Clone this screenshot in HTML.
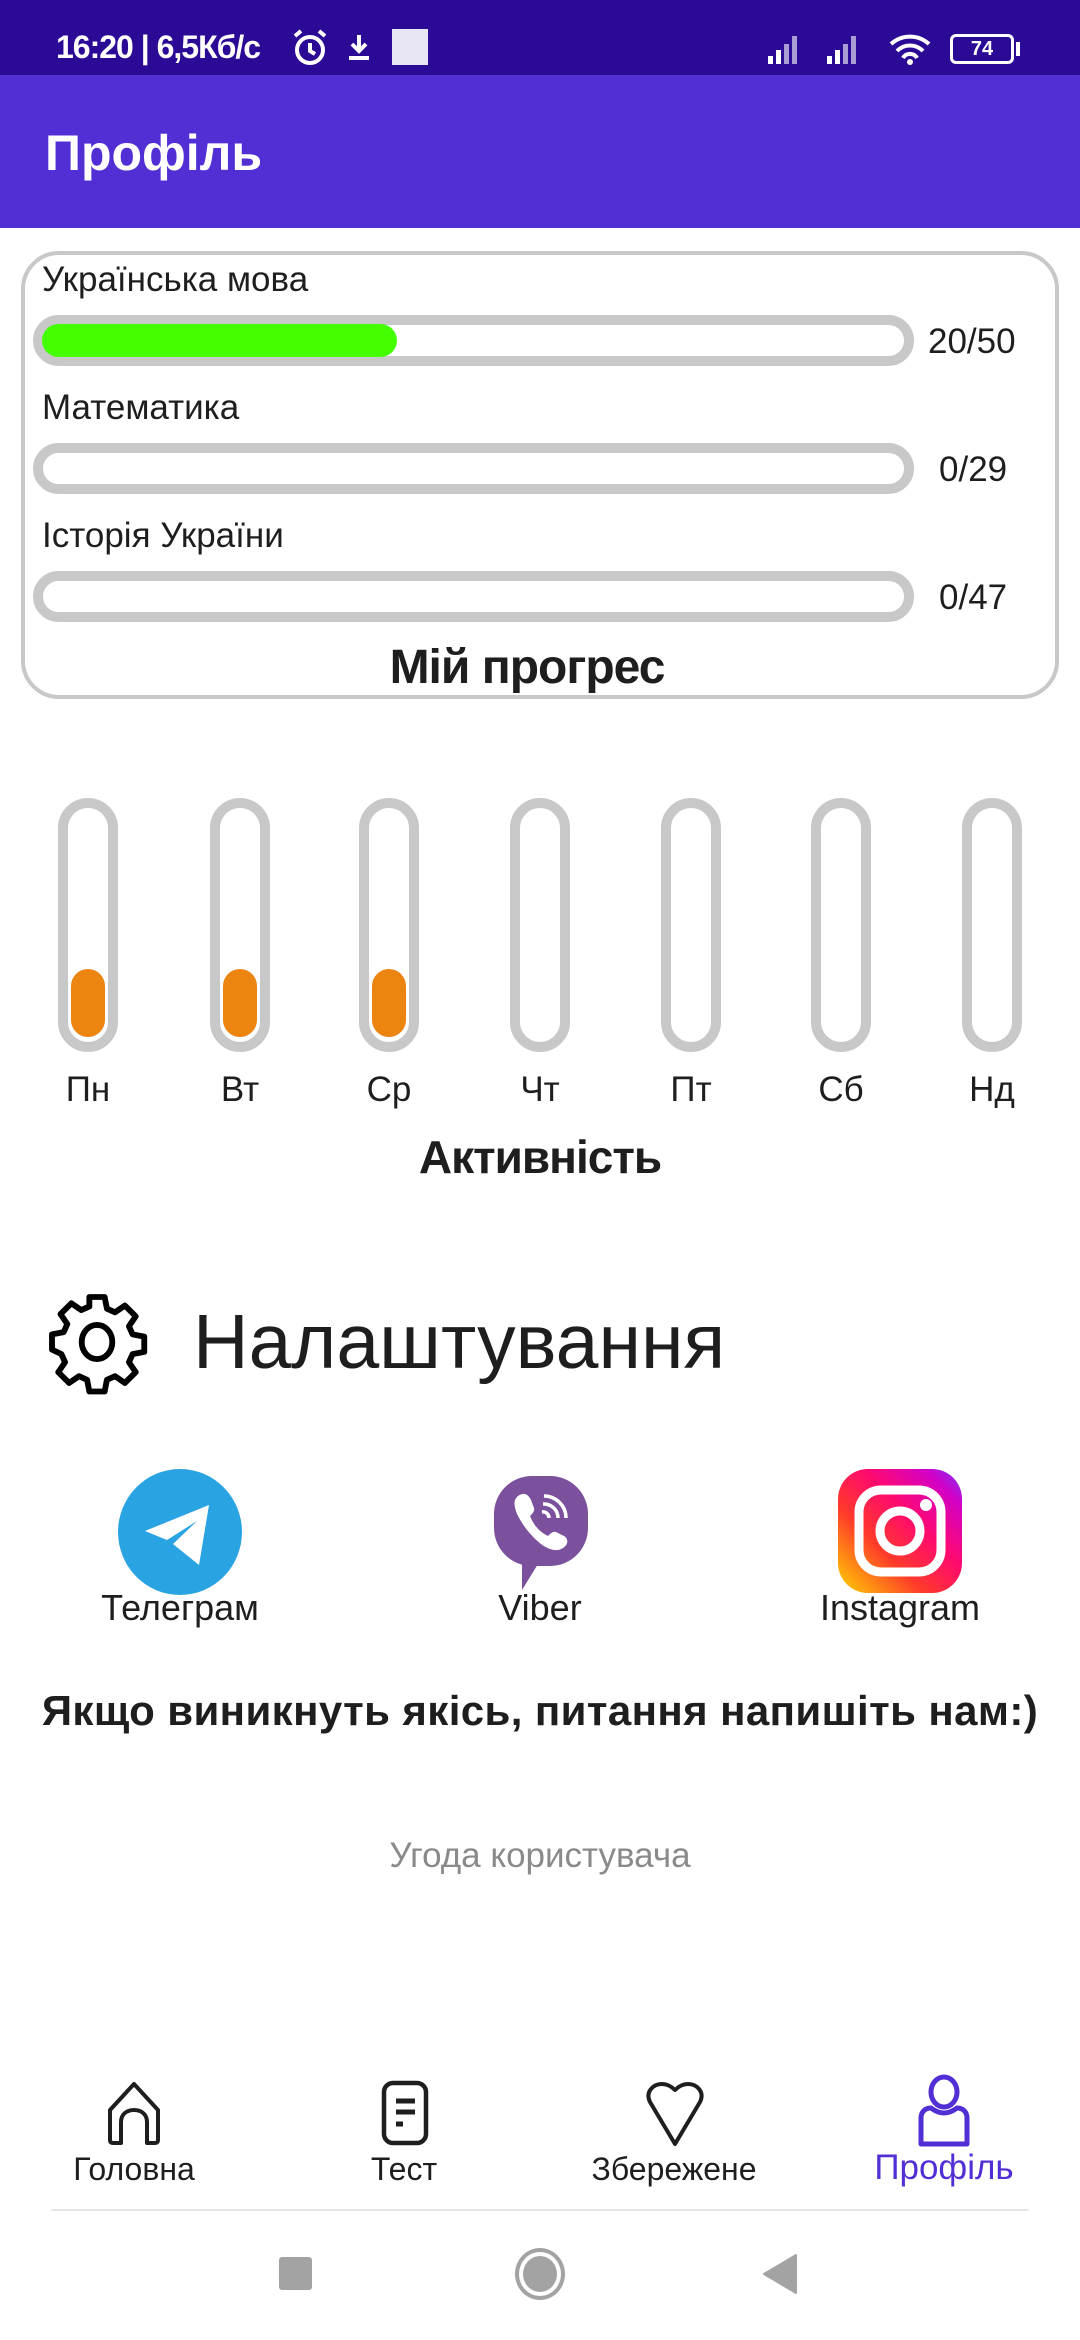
<!DOCTYPE html>
<html><head><meta charset="utf-8"><style>
*{margin:0;padding:0;box-sizing:border-box}
body{width:1080px;height:2340px;position:relative;background:#fff;font-family:"Liberation Sans","DejaVu Sans",sans-serif;color:#1e1e1e;overflow:hidden}
.a{position:absolute;white-space:nowrap}
.bar{position:absolute;left:33px;width:881px;height:51px;border:10px solid #c8c8c8;border-radius:26px;background:#fff}
.lbl{position:absolute;left:42px;font-size:35px;line-height:1}
.num{position:absolute;font-size:35px;line-height:1}
.col{position:absolute;top:798px;width:60px;height:254px;border:10px solid #c8c8c8;border-radius:30px;background:#fff}
.fill{position:absolute;left:3px;bottom:5px;width:34px;height:68px;border-radius:17px;background:#ec8410}
.day{position:absolute;top:1072px;width:120px;text-align:center;font-size:35px;line-height:1}
.nl{position:absolute;top:2153px;width:240px;text-align:center;font-size:32px;line-height:1}
</style></head><body>
<div class="a" style="left:0;top:0;width:1080px;height:75px;background:#2b0b96"></div>
<div class="a" style="left:56px;top:29px;font-size:32px;color:#fff;font-weight:bold;letter-spacing:-1px">16:20 | 6,5Кб/с</div>
<svg class="a" style="left:290px;top:28px" width="40" height="40" viewBox="0 0 40 40"><circle cx="20" cy="22" r="13" fill="none" stroke="#fff" stroke-width="4"/><path d="M20 15v8l5 3M5 8l6-5M35 8l-6-5" stroke="#fff" stroke-width="4" fill="none"/></svg>
<svg class="a" style="left:344px;top:32px" width="30" height="30" viewBox="0 0 30 30"><path d="M15 3v16M8 12l7 7 7-7M5 26h20" stroke="#fff" stroke-width="4" fill="none"/></svg>
<div class="a" style="left:392px;top:29px;width:36px;height:36px;background:#e8e6f5"></div>
<svg class="a" style="left:765px;top:30px" width="200" height="36" viewBox="0 0 200 36"><g fill="#fff"><rect x="3" y="26" width="5" height="8"/><rect x="11" y="20" width="5" height="14"/><rect x="19" y="14" width="5" height="20" opacity=".6"/><rect x="27" y="6" width="5" height="28" opacity=".6"/><rect x="62" y="26" width="5" height="8"/><rect x="70" y="20" width="5" height="14"/><rect x="78" y="14" width="5" height="20" opacity=".6"/><rect x="86" y="6" width="5" height="28" opacity=".6"/></g><path d="M126 14a28 28 0 0 1 38 0M132 21a18 18 0 0 1 26 0M138 28a8 8 0 0 1 14 0" stroke="#fff" stroke-width="4" fill="none"/><circle cx="145" cy="32" r="3" fill="#fff"/></svg>
<div class="a" style="left:950px;top:34px;width:64px;height:30px;border:3px solid #fff;border-radius:6px;color:#fff;font-size:20px;font-weight:bold;text-align:center;line-height:24px">74</div>
<div class="a" style="left:1016px;top:42px;width:4px;height:14px;background:#fff"></div>
<div class="a" style="left:0;top:75px;width:1080px;height:153px;background:#512fd4"></div>
<div class="a" style="left:45px;top:128px;font-size:50px;color:#fff;font-weight:bold;line-height:1">Профіль</div>

<div class="a" style="left:21px;top:251px;width:1038px;height:448px;border:4px solid #c8c8c8;border-radius:38px"></div>
<div class="lbl" style="top:262px">Українська мова</div>
<div class="bar" style="top:315px"></div>
<div class="a" style="left:42px;top:324px;width:355px;height:33px;border-radius:17px;background:#44ff00"></div>
<div class="num" style="left:928px;top:324px">20/50</div>
<div class="lbl" style="top:390px">Математика</div>
<div class="bar" style="top:443px"></div>
<div class="num" style="left:939px;top:452px">0/29</div>
<div class="lbl" style="top:518px">Історія України</div>
<div class="bar" style="top:571px"></div>
<div class="num" style="left:939px;top:580px">0/47</div>
<div class="a" style="left:0;width:1054px;top:644px;text-align:center;font-size:48px;font-weight:bold;line-height:1;letter-spacing:-1px">Мій прогрес</div>

<div class="col" style="left:58px"><div class="fill"></div></div>
<div class="col" style="left:210px"><div class="fill"></div></div>
<div class="col" style="left:359px"><div class="fill"></div></div>
<div class="col" style="left:510px"></div>
<div class="col" style="left:661px"></div>
<div class="col" style="left:811px"></div>
<div class="col" style="left:962px"></div>
<div class="day" style="left:28px">Пн</div>
<div class="day" style="left:180px">Вт</div>
<div class="day" style="left:329px">Ср</div>
<div class="day" style="left:480px">Чт</div>
<div class="day" style="left:631px">Пт</div>
<div class="day" style="left:781px">Сб</div>
<div class="day" style="left:932px">Нд</div>
<div class="a" style="left:0;width:1080px;top:1134px;text-align:center;font-size:46px;font-weight:bold;line-height:1;letter-spacing:-1px">Активність</div>

<svg class="a" style="left:42px;top:1288px" width="110" height="108" viewBox="0 0 24 24"><path fill="none" stroke="#000" stroke-width="1.3" stroke-linejoin="round" d="M10.3 2h3.4l.5 2.6 1.8.8 2.2-1.5 2.4 2.4-1.5 2.2.8 1.8 2.6.5v3.4l-2.6.5-.8 1.8 1.5 2.2-2.4 2.4-2.2-1.5-1.8.8-.5 2.6h-3.4l-.5-2.6-1.8-.8-2.2 1.5-2.4-2.4 1.5-2.2-.8-1.8L2 13.7v-3.4l2.6-.5.8-1.8-1.5-2.2 2.4-2.4 2.2 1.5 1.8-.8z"/><ellipse cx="12" cy="12" rx="3.4" ry="3.8" fill="none" stroke="#000" stroke-width="1.3"/></svg>
<div class="a" style="left:193px;top:1304px;font-size:77px;line-height:1">Налаштування</div>

<svg class="a" style="left:117px;top:1469px" width="126" height="126" viewBox="0 0 126 126"><ellipse cx="63" cy="63" rx="62" ry="63" fill="#2aa3e3"/><path d="M28 62 92 36 82 96 56 75 80 52 50 71z" fill="#fff"/></svg>
<svg class="a" style="left:486px;top:1472px" width="108" height="122" viewBox="0 0 108 122"><rect x="8" y="4" width="94" height="90" rx="38" fill="#7b519d"/><path d="M36 88 36 118 52 92z" fill="#7b519d"/><path d="M32 24c6-4 10-2 13 4l3 8c1 3-2 6-4 8 4 10 10 16 18 20 2-2 5-5 8-4l8 4c5 3 4 9-1 12-6 4-14 2-22-4-10-8-18-18-24-30-3-8-4-14 1-18z" fill="#fff"/><path d="M58 24a22 22 0 0 1 22 22M57 32a14 14 0 0 1 15 14M56 40a6 6 0 0 1 7 6" stroke="#fff" stroke-width="3.5" fill="none"/></svg>
<svg class="a" style="left:838px;top:1469px" width="124" height="124" viewBox="0 0 124 124"><defs><linearGradient id="g" x1="0" y1="1" x2="1" y2="0"><stop offset="0" stop-color="#ffd600"/><stop offset=".35" stop-color="#ff3a2a"/><stop offset=".6" stop-color="#ff0a6e"/><stop offset=".85" stop-color="#d300c5"/><stop offset="1" stop-color="#7638fa"/></linearGradient></defs><rect width="124" height="124" rx="30" fill="url(#g)"/><rect x="21" y="21" width="82" height="82" rx="22" fill="none" stroke="#fff" stroke-width="9"/><circle cx="62" cy="62" r="20" fill="none" stroke="#fff" stroke-width="9"/><circle cx="88" cy="36" r="6" fill="#fff"/></svg>
<div class="a" style="left:60px;width:240px;top:1590px;text-align:center;font-size:36px;line-height:1">Телеграм</div>
<div class="a" style="left:420px;width:240px;top:1590px;text-align:center;font-size:36px;line-height:1">Viber</div>
<div class="a" style="left:780px;width:240px;top:1590px;text-align:center;font-size:36px;line-height:1">Instagram</div>
<div class="a" style="left:0;width:1080px;top:1690px;text-align:center;font-size:42px;font-weight:bold;line-height:1;letter-spacing:0.4px">Якщо виникнуть якісь, питання напишіть нам:)</div>
<div class="a" style="left:0;width:1080px;top:1838px;text-align:center;font-size:35px;color:#8a8a8a;line-height:1">Угода користувача</div>

<svg class="a" style="left:104px;top:2080px" width="60" height="66" viewBox="0 0 60 66"><path d="M30 4 54 30v30c0 3-2 3-5 3h-6V42c0-8-6-12-13-12s-13 4-13 12v21h-6c-3 0-5 0-5-3V30z" fill="none" stroke="#1e1e1e" stroke-width="4" stroke-linejoin="round"/></svg>
<svg class="a" style="left:380px;top:2080px" width="50" height="66" viewBox="0 0 50 66"><rect x="4" y="3" width="42" height="60" rx="9" fill="none" stroke="#1e1e1e" stroke-width="4.5"/><path d="M16 21h19M16 32h19M16 44h7" stroke="#1e1e1e" stroke-width="5"/></svg>
<svg class="a" style="left:644px;top:2082px" width="62" height="66" viewBox="0 0 62 66"><path d="M31 62 6 20C1 10 9 2 18 2c6 0 10 3 13 6 3-3 7-6 13-6 9 0 17 8 12 18z" fill="none" stroke="#1e1e1e" stroke-width="4" stroke-linejoin="round"/></svg>
<svg class="a" style="left:916px;top:2074px" width="56" height="74" viewBox="0 0 56 74"><ellipse cx="28" cy="18" rx="13" ry="15" fill="none" stroke="#512fd4" stroke-width="5"/><path d="M5 70V44c0-6 4-10 10-10 4 3 8 5 13 5s9-2 13-5c6 0 10 4 10 10v26z" fill="none" stroke="#512fd4" stroke-width="5" stroke-linejoin="round"/></svg>
<div class="nl" style="left:14px">Головна</div>
<div class="nl" style="left:284px">Тест</div>
<div class="nl" style="left:554px">Збережене</div>
<div class="nl" style="left:824px;color:#512fd4;font-size:35px;top:2150px">Профіль</div>
<div class="a" style="left:51px;top:2209px;width:978px;height:2px;background:#e6e6e6"></div>
<div class="a" style="left:279px;top:2257px;width:33px;height:33px;background:#a3a3a3;border-radius:3px"></div>
<div class="a" style="left:515px;top:2248px;width:50px;height:52px;border:4px solid #a3a3a3;border-radius:50%"></div>
<div class="a" style="left:523px;top:2256px;width:34px;height:36px;background:#a3a3a3;border-radius:50%"></div>
<svg class="a" style="left:762px;top:2253px" width="36" height="42" viewBox="0 0 36 42"><path d="M34 2v38L2 21z" fill="#a3a3a3" stroke="#a3a3a3" stroke-width="2" stroke-linejoin="round"/></svg>
</body></html>
